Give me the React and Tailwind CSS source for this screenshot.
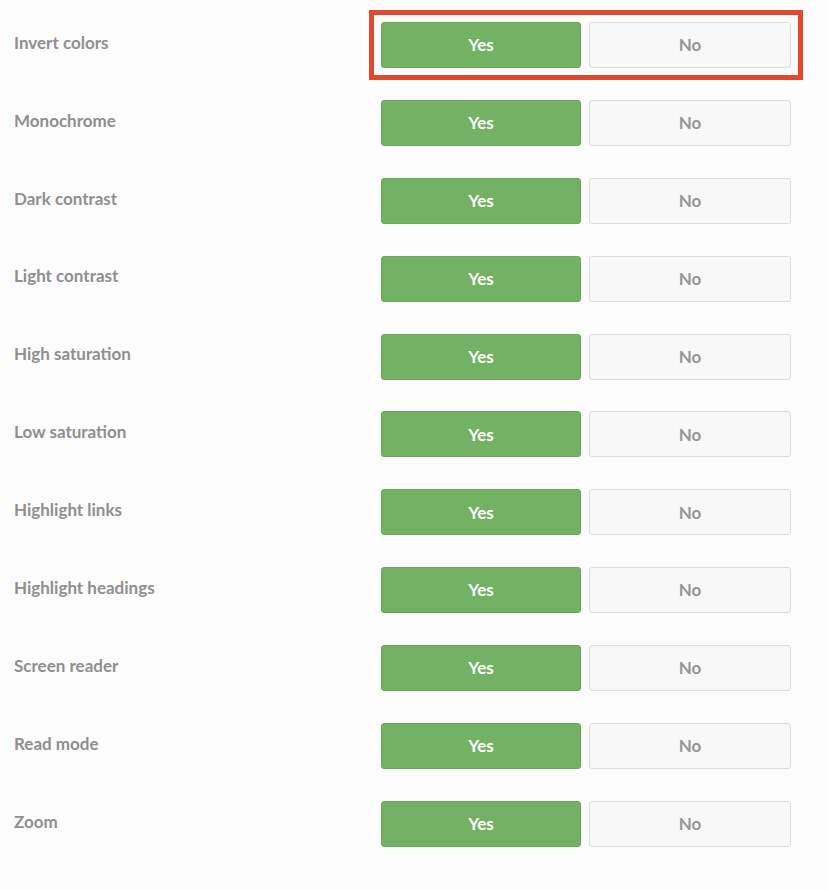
import React, { useState } from 'react';

const OPTIONS = [
    'Invert colors',
    'Monochrome',
    'Dark contrast',
    'Light contrast',
    'High saturation',
    'Low saturation',
    'Highlight links',
    'Highlight headings',
    'Screen reader',
    'Read mode',
    'Zoom',
];

const App = () => {
    const [values, setValues] = useState(() => OPTIONS.map(() => true));

    // Changer la valeur d'une option
    const setValue = (index, value) => {
        setValues(values.map((v, i) => (i === index ? value : v)));
    };

    return (
        <div
            className="min-h-[890px] bg-[#fcfcfc] pt-[22px] pl-[14px] pr-[37px]"
            style={{ fontFamily: 'Lato, "Open Sans", sans-serif' }}
        >
            <div className="flex flex-col gap-[31.9px]">
                {OPTIONS.map((label, index) => (
                    <div key={label} className="flex items-center">
                        <div className="flex-1 pb-[5px] text-[17px] font-bold text-[#8f8f8f]">
                            {label}
                        </div>
                        <div
                            className={
                                index === 0
                                    ? 'flex gap-2 outline-[5px] outline-solid outline-offset-[7px] outline-[#e2472f]'
                                    : 'flex gap-2'
                            }
                        >
                            <button
                                className="h-[46px] w-[200px] rounded-[3px] border border-[#6aa95b] bg-[#73b165] text-[17px] font-bold text-white"
                                onClick={() => setValue(index, true)}
                            >
                                Yes
                            </button>
                            <button
                                className="h-[46px] w-[202px] rounded-[3px] border border-[#dcdcdc] bg-[#f8f8f8] text-[17px] font-bold text-[#959595]"
                                onClick={() => setValue(index, false)}
                            >
                                No
                            </button>
                        </div>
                    </div>
                ))}
            </div>
        </div>
    );
};

export default App;
